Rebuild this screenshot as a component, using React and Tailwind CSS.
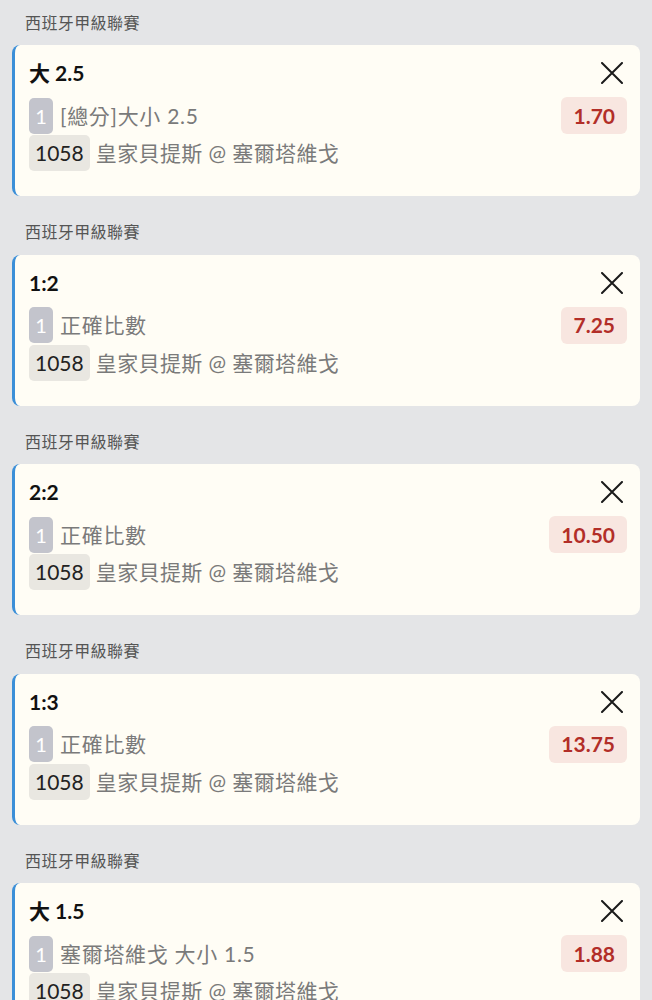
import React from "react";

const items = [
  { title: "大 2.5", market: "[總分]大小 2.5", odds: "1.70" },
  { title: "1:2", market: "正確比數", odds: "7.25" },
  { title: "2:2", market: "正確比數", odds: "10.50" },
  { title: "1:3", market: "正確比數", odds: "13.75" },
  { title: "大 1.5", market: "塞爾塔維戈 大小 1.5", odds: "1.88" },
];

const font = { fontFamily: "Lato, 'Noto Sans CJK TC', sans-serif" };

function XIcon() {
  return (
    <svg width="22" height="22" viewBox="0 0 22 22" fill="none" stroke="#1a1a1a" strokeWidth="2" strokeLinecap="round">
      <path d="M1 1 L21 21 M21 1 L1 21" />
    </svg>
  );
}

function Card({ item }) {
  return (
    <div>
      <div className="h-[45px] flex items-center pl-[25px] text-[16px] text-[#555] tracking-[0.4px]">西班牙甲級聯賽</div>
      <div className="mx-[12px] h-[151px] rounded-[8px] border-l-[3px] border-[#3b8fd8] bg-[#fffdf5] pl-[14px] pr-[13px] pt-[14px] flex flex-col">
        <div className="flex items-center justify-between h-[28px]">
          <div className="text-[21px] font-bold text-[#111] leading-[28px]">{item.title}</div>
          <div className="pr-[4px] flex items-center"><XIcon /></div>
        </div>
        <div className="mt-[10px] flex items-center justify-between h-[37px]">
          <div className="flex items-center">
            <span className="h-[36px] w-[24px] rounded-[5px] bg-[#c3c4cc] text-white text-[20px] flex items-center justify-center">1</span>
            <span className="ml-[7px] text-[21px] text-[#7a7a7a] tracking-[0.7px]">{item.market}</span>
          </div>
          <div className="h-[37px] rounded-[6px] bg-[#f8e6e0] px-[12px] flex items-center text-[21px] font-bold text-[#b22e28]">{item.odds}</div>
        </div>
        <div className="mt-[1px] flex items-center h-[36px]">
          <span className="h-[36px] rounded-[5px] bg-[#e9e7e1] text-[#222] text-[21px] px-[6px] flex items-center">1058</span>
          <span className="ml-[6px] text-[21px] text-[#7a7a7a] tracking-[0.4px]">皇家貝提斯 @ 塞爾塔維戈</span>
        </div>
      </div>
      <div className="h-[13.5px]" />
    </div>
  );
}

export default function App() {
  return (
    <div className="min-h-screen w-[652px] bg-[#e4e5e7]" style={font}>
      {items.map((it, i) => (
        <Card key={i} item={it} />
      ))}
    </div>
  );
}
